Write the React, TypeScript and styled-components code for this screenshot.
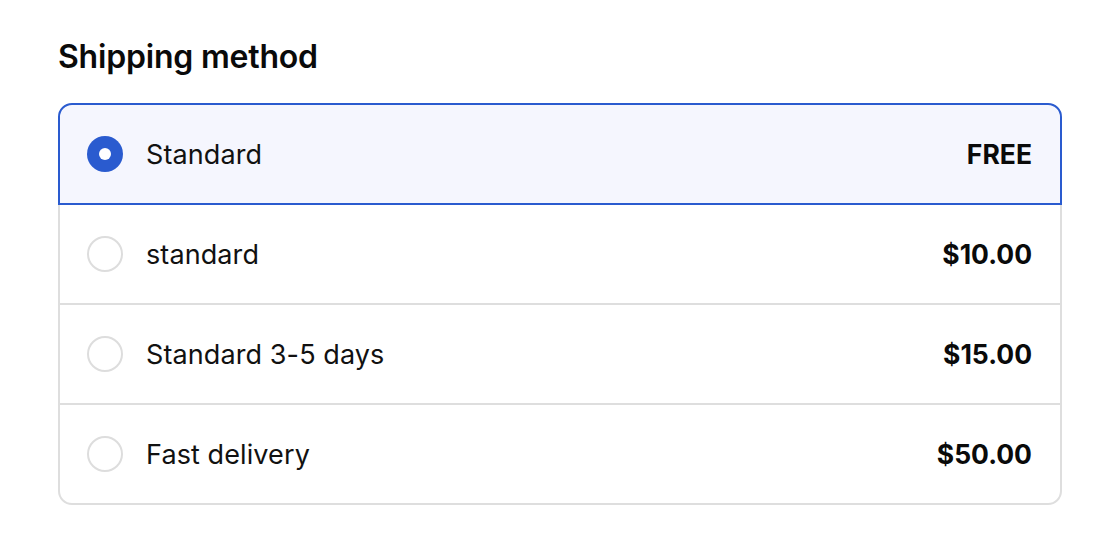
import React, { useState } from "react";
import styled, { createGlobalStyle } from "styled-components";

const Global = createGlobalStyle`
  html, body { margin: 0; padding: 0; background: #ffffff; }
  body { font-family: Inter, "Noto Sans", "Liberation Sans", sans-serif; color: #111111; }
`;

const Page = styled.div`
  padding: 37px 54px 0 58px;
  display: flex;
  flex-direction: column;
`;

const Title = styled.h2`
  margin: 0 0 26px;
  font-size: 32px;
  line-height: 40px;
  font-weight: 600;
  letter-spacing: -0.2px;
  color: #0a0a0a;
`;

const List = styled.div`
  display: flex;
  flex-direction: column;
`;

const Row = styled.label<{ $selected: boolean; $first: boolean; $last: boolean }>`
  display: flex;
  align-items: center;
  height: 98px;
  padding: 0 28px 0 27px;
  border: 2px solid ${(p) => (p.$selected ? "#2a5bcf" : "#dedede")};
  background: ${(p) => (p.$selected ? "#f5f6fe" : "#ffffff")};
  margin-top: ${(p) => (p.$first ? "0" : "-2px")};
  border-radius: ${(p) => (p.$first ? "14px 14px 0 0" : p.$last ? "0 0 14px 14px" : "0")};
  position: relative;
  z-index: ${(p) => (p.$selected ? 1 : 0)};
  cursor: pointer;
`;

const Radio = styled.span<{ $selected: boolean }>`
  flex: none;
  width: 36px;
  height: 36px;
  box-sizing: border-box;
  border-radius: 50%;
  display: flex;
  align-items: center;
  justify-content: center;
  background: ${(p) => (p.$selected ? "#2a5bcf" : "#ffffff")};
  border: ${(p) => (p.$selected ? "none" : "2px solid #dddddd")};
  &::after {
    content: "";
    display: ${(p) => (p.$selected ? "block" : "none")};
    width: 12px;
    height: 12px;
    border-radius: 50%;
    background: #ffffff;
  }
`;

const Name = styled.span`
  flex: 1;
  margin-left: 23px;
  font-size: 27px;
  letter-spacing: 0.1px;
  font-weight: 400;
  color: #111111;
`;

const Price = styled.span`
  font-size: 26.5px;
  font-weight: 700;
  color: #0a0a0a;
`;

const options = [
  { id: "a", name: "Standard", price: "FREE" },
  { id: "b", name: "standard", price: "$10.00" },
  { id: "c", name: "Standard 3-5 days", price: "$15.00" },
  { id: "d", name: "Fast delivery", price: "$50.00" },
];

export default function App() {
  const [sel, setSel] = useState("a");
  return (
    <>
      <Global />
      <Page>
        <Title>Shipping method</Title>
        <List>
          {options.map((o, i) => (
            <Row
              key={o.id}
              $selected={sel === o.id}
              $first={i === 0}
              $last={i === options.length - 1}
              onClick={() => setSel(o.id)}
            >
              <Radio $selected={sel === o.id} />
              <Name>{o.name}</Name>
              <Price>{o.price}</Price>
            </Row>
          ))}
        </List>
      </Page>
    </>
  );
}
